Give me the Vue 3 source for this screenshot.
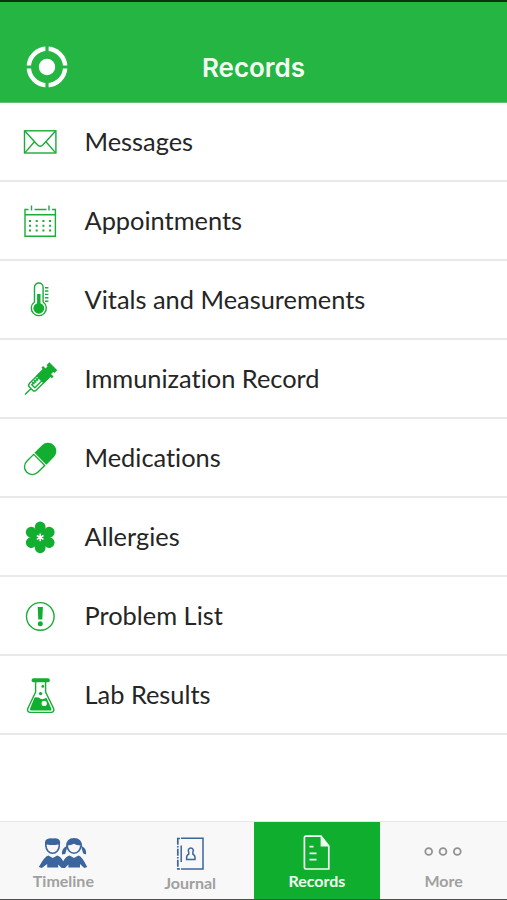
<template>
  <div class="screen">
    <header class="header">
      <svg class="logo" viewBox="0 0 44 44">
        <circle cx="22" cy="22" r="8.2" fill="#fff"/>
        <circle cx="22" cy="22" r="18.2" fill="none" stroke="#fff" stroke-width="4.4"/>
        <path d="M22 0V8M22 36V44M0 22H8M36 22H44" stroke="#24b543" stroke-width="3.2"/>
      </svg>
      <h1>Records</h1>
    </header>

    <ul class="list">
      <li v-for="row in rows" :key="row.id" class="row">
        <svg class="icon" viewBox="0 0 36 36">
          <g v-if="row.id==='messages'" class="line">
            <rect x="2.5" y="6.8" width="31.4" height="22.2"/>
            <path d="M3 7.3L15.4 20.8Q18.2 23.6 21 20.8L33.4 7.3M3 28.6L12.2 18M33.4 28.6L24.2 18"/>
          </g>
          <g v-else-if="row.id==='appointments'">
            <g class="line">
              <path d="M6.5 6.5H3V33.3H33.4V6.5H30M12.5 6.5H24.5M3 11.7H33.4M9.5 2.5V7.5M27 2.5V7.5"/>
            </g>
            <path class="dots" d="M7 18H30M7 22.8H30M7 27.6H30"/>
          </g>
          <g v-else-if="row.id==='vitals'">
            <path class="line" d="M12.5 20V5.3a4.3 4.3 0 0 1 8.6 0V20a7.5 7.5 0 1 1-8.6 0Z"/>
            <circle class="solid" cx="16.8" cy="26.3" r="5.4"/>
            <path class="bar" d="M16.8 12V25"/>
            <path class="line" d="M23 5.7H26.4M23 9H26.4M23 12.4H26.4M23 15.7H26.4M23 19.2H26.4"/>
          </g>
          <g v-else-if="row.id==='immunization'" transform="translate(3 33.6) rotate(-45)">
            <path class="line" d="M0 0H8M8.5 -2.2Q8.5 -4.8 11 -4.8H30V4.8H11Q8.5 4.8 8.5 2.2Z"/>
            <path class="solid" d="M21 -5.3H31V5.3H21ZM30.5 -7.4H33V7.4H30.5ZM32 -4H37V4H32ZM36 -5.6H40V5.6H36Z"/>
            <rect class="line" x="11.8" y="-2.2" width="10" height="4.4"/>
            <path class="line" d="M14 -4V-.6M16.6 -4V-.6M19.2 -4V-.6"/>
          </g>
          <g v-else-if="row.id==='medications'" transform="translate(18.2 18.9) rotate(-45)">
            <path class="line" d="M-1.4 -7.8H-11.2a7.8 7.8 0 0 0 0 15.6H-1.4Z"/>
            <path class="solid" d="M.3 -8.4H11a8.4 8.4 0 0 1 0 16.8H.3Z"/>
          </g>
          <g v-else-if="row.id==='allergies'">
            <circle v-for="n in 6" :key="n" class="solid" cx="18.2" cy="8" r="5.4" :transform="`rotate(${n*60} 18.2 18.4)`"/>
            <circle class="solid" cx="18.2" cy="18.4" r="9.6"/>
            <path class="star" d="M18.2 14.6V22.2M14.9 16.5L21.5 20.3M14.9 20.3L21.5 16.5"/>
          </g>
          <g v-else-if="row.id==='problems'">
            <circle class="line" cx="18.3" cy="18.4" r="13.8"/>
            <path class="solid" d="M15.7 9H20.9L20.3 21.4H16.3Z"/>
            <circle class="solid" cx="18.3" cy="25.8" r="2.5"/>
          </g>
          <g v-else>
            <rect class="solid" x="9.6" y="1.2" width="18.2" height="4" rx="1.8"/>
            <path class="line" d="M13.6 5V15L5.8 31.4Q4.8 35.4 8.6 35.4H28.8Q32.6 35.4 31.6 31.4L23.6 15V5"/>
            <path class="solid" d="M12.5 20.6Q15.5 19.6 18 21.4T24.4 20.8L29.2 31.2Q30 33.6 28 33.6H9.6Q7.4 33.6 8.2 31.2Z"/>
            <circle cx="22.2" cy="26.4" r="2.6" fill="#fff"/>
            <circle class="solid" cx="18.6" cy="16.6" r="1.7"/>
            <circle class="solid" cx="20.8" cy="9.4" r="1.4"/>
          </g>
        </svg>
        <span class="label">{{ row.label }}</span>
      </li>
    </ul>

    <nav class="tabs">
      <div class="tab">
        <svg class="people" viewBox="0 0 50 32">
          <g fill="#3b659c">
            <path d="M7 10V5Q7.6 1 14.5 1.4Q21.6 .4 22.2 5L21.7 10L20.2 7.4Q14.5 8.6 9 7.4Z"/>
            <path d="M10.4 18.4L14.8 21L19.2 18.4Q23 19.4 25.2 24.2Q27.4 19.4 31.6 18.4L36 21L40.4 18.4Q44.2 19.4 49.2 30L46.2 31L42 27V30.6H30.4V27.6L27 31H23.6L20.2 27.6V30.6H9.2V27L3.8 31L.8 30Q6.4 19.4 10.4 18.4Z"/>
            <path d="M28 9.5Q28 1 36 1T44.2 9.5Q48.8 11.4 48 17.6L45.2 16.6L44 12.4L42.8 8.4Q38 8.4 36 6.8Q33 8.6 29.6 8.6L28.4 13L27.2 17L24 17.4Q23.6 11.4 28 9.5Z"/>
          </g>
          <path d="M7.9 8.6a6.7 7.6 0 0 0 13.4 0M29.2 8.6a6.8 7.6 0 0 0 13.6 0" fill="none" stroke="#3b659c" stroke-width="1.6"/>
        </svg>
        <span>Timeline</span>
      </div>
      <div class="tab journal">
        <svg class="book" viewBox="0 0 28 34" fill="none" stroke="#3b659c" stroke-width="1.5">
          <path d="M5 1.2H27V32H5"/>
          <path d="M1.8 .8V33M1 1.5H4M1 32H4" stroke-width="1.7" stroke-dasharray="7 1.2 1.6 1.2"/>
          <path d="M5.2 8.5V25"/>
          <path d="M14.8 11a2.5 2.5 0 0 1 2.1 3.9V17.2Q19.4 18 19 22.4H10.6Q10.2 18 12.7 17.2V14.9a2.5 2.5 0 0 1 2.1-3.9Z"/>
        </svg>
        <span>Journal</span>
      </div>
      <div class="tab active">
        <svg class="file" viewBox="0 0 28 36">
          <path d="M2.8 1.2H18L25.8 11V34H2.8Q1.4 34 1.4 32.6V2.6Q1.4 1.2 2.8 1.2Z" fill="none" stroke="#effff0" stroke-width="1.7"/>
          <path d="M17.6 1.2V11.6H26Z" fill="#effff0"/>
          <path d="M6.5 11.6H10.5M6.5 18.4H13.5M6.5 24.6H13.5" stroke="#effff0" stroke-width="1.8"/>
        </svg>
        <span>Records</span>
      </div>
      <div class="tab">
        <svg class="more" viewBox="0 0 40 32" fill="none" stroke="#929292" stroke-width="1.8">
          <circle cx="4.7" cy="15.5" r="3.4"/>
          <circle cx="19" cy="15.5" r="3.4"/>
          <circle cx="33.3" cy="15.5" r="3.4"/>
        </svg>
        <span>More</span>
      </div>
    </nav>
  </div>
</template>

<script setup>
const rows = [
  { id:'messages', label:'Messages' },
  { id:'appointments', label:'Appointments' },
  { id:'vitals', label:'Vitals and Measurements' },
  { id:'immunization', label:'Immunization Record' },
  { id:'medications', label:'Medications' },
  { id:'allergies', label:'Allergies' },
  { id:'problems', label:'Problem List' },
  { id:'labs', label:'Lab Results' }
]
</script>

<style>
body { margin: 0; background: #fff; }
</style>

<style scoped>
.screen {
  display: flex;
  flex-direction: column;
  box-sizing: border-box;
  width: 507px;
  height: 900px;
  border-top: 2px solid #06350f;
  border-bottom: 1px solid #4c504d;
  background: #fff;
  font-family: Lato, "Liberation Sans", sans-serif;
}

.header {
  display: grid;
  grid-template-columns: 88px 1fr 88px;
  align-items: end;
  box-sizing: border-box;
  height: 101px;
  flex: none;
  padding-bottom: 13px;
  background: #24b543;
  border-bottom: 1px solid #5fc274;
}
.logo { width: 44px; height: 44px; margin-left: 25px; }
h1 {
  margin: 0;
  text-align: center;
  color: #f4fff4;
  font: 600 26px/42px Inter, sans-serif;
}

.list { margin: 0; padding: 0; list-style: none; flex: 1; }
.row {
  display: flex;
  align-items: center;
  gap: 26.5px;
  box-sizing: border-box;
  height: 79px;
  padding-left: 22px;
  border-bottom: 2px solid #e9e9e9;
  color: #252525;
  font-size: 25.4px;
  font-variant-ligatures: none;
}
.label { padding-bottom: 2px; }
.icon { width: 36px; height: 36px; flex: none; }
.line { fill: none; stroke: #1bab38; stroke-width: 1.4; }
.solid { fill: #12ae30; }
.bar { stroke: #12ae30; stroke-width: 3.4; }
.dots { stroke: #1bab38; stroke-width: 2; stroke-dasharray: 2 4.7; }
.star { stroke: #fff; stroke-width: 1.5; }

.tabs {
  display: grid;
  grid-template-columns: repeat(4, 1fr);
  height: 78px;
  flex: none;
  box-sizing: border-box;
  border-top: 1px solid #e6e6e6;
  background: #f8f8f8;
}
.tab {
  display: flex;
  flex-direction: column;
  align-items: center;
  justify-content: flex-end;
  padding-bottom: 8px;
  color: #a0a0a0;
  font-size: 16px;
  font-weight: 700;
  line-height: 20px;
}
.tab.active { background: #10ae2f; color: #effff0; }
.tab.journal { padding-bottom: 6px; }
.people { width: 50px; height: 32px; margin-bottom: 2px; }
.book { width: 28px; height: 34px; margin-bottom: 2px; }
.file { width: 28px; height: 36px; }
.more { width: 40px; height: 32px; margin-bottom: 3px; }
</style>
